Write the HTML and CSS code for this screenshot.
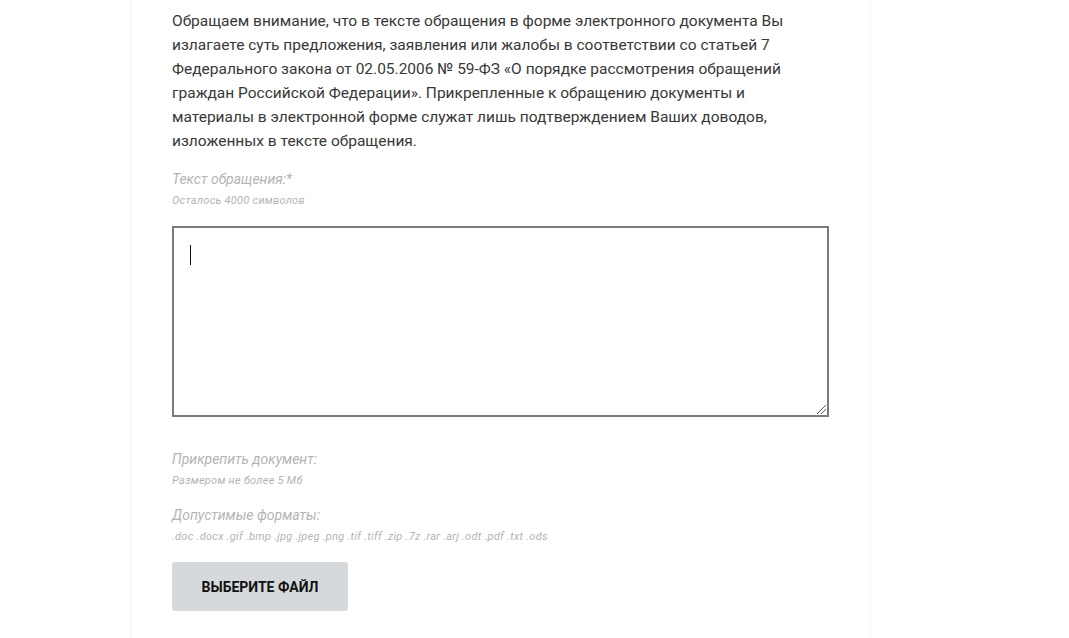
FILE: index.html
```html
<!DOCTYPE html>
<html lang="ru">
<head>
<meta charset="utf-8">
<link rel="stylesheet" href="styles.css">
</head>
<body>
<div class="card">
  <p class="notice">Обращаем внимание, что в тексте обращения в форме электронного документа Вы излагаете суть предложения, заявления или жалобы в соответствии со статьей 7 Федерального закона от 02.05.2006 № 59-ФЗ «О порядке рассмотрения обращений граждан Российской Федерации». Прикрепленные к обращению документы и материалы в электронной форме служат лишь подтверждением Ваших доводов, изложенных в тексте обращения.</p>

  <div class="field">
    <div class="label">Текст обращения:*</div>
    <div class="hint">Осталось 4000 символов</div>
    <div class="textarea"><span class="caret"></span><span class="grip"></span></div>
  </div>

  <div class="field attach">
    <div class="label">Прикрепить документ:</div>
    <div class="hint">Размером не более 5 Мб</div>
    <div class="label second">Допустимые форматы:</div>
    <div class="hint">.doc .docx .gif .bmp .jpg .jpeg .png .tif .tiff .zip .7z .rar .arj .odt .pdf .txt .ods</div>
    <button class="file-btn">ВЫБЕРИТЕ ФАЙЛ</button>
  </div>
</div>
</body>
</html>
```

FILE: styles.css
```css
html, body {
  margin: 0;
  padding: 0;
  background: #ffffff;
}
body {
  font-family: Roboto, "Liberation Sans", sans-serif;
  overflow: hidden;
}
.card {
  margin-left: 132px;
  width: 737px;
  min-height: 700px;
  box-sizing: border-box;
  padding: 9px 40px 0 40px;
  background: #fff;
  box-shadow: 0 0 6px rgba(0, 0, 0, 0.07);
}
.notice {
  margin: 0;
  font-size: 15.5px;
  line-height: 24px;
  color: #383838;
}
.field {
  margin-top: 17px;
}
.label {
  font-size: 14px;
  line-height: 18px;
  font-style: italic;
  color: #b4b4b4;
}
.hint {
  margin-top: 6px;
  font-size: 11px;
  line-height: 14px;
  letter-spacing: 0.27px;
  font-style: italic;
  color: #b4b4b4;
}
.textarea {
  position: relative;
  margin-top: 18px;
  width: 657px;
  height: 191px;
  box-sizing: border-box;
  border: 2px solid #7b7b7b;
  background: #fff;
  padding: 17px 16px;
}
.caret {
  display: block;
  width: 1px;
  height: 20px;
  background: #111;
}
.grip {
  position: absolute;
  right: 1px;
  bottom: 1px;
  width: 9px;
  height: 9px;
  background: linear-gradient(135deg, transparent 0 45%, #555 45% 52%, transparent 52% 68%, #555 68% 75%, transparent 75%);
}
.attach {
  margin-top: 33px;
}
.label.second {
  margin-top: 18px;
}
.file-btn {
  display: block;
  margin-top: 18px;
  width: 176px;
  height: 49px;
  border: none;
  border-radius: 3px;
  background: #d6d9db;
  color: #111;
  font-family: Roboto, "Liberation Sans", sans-serif;
  font-weight: 700;
  font-size: 14px;
  letter-spacing: 0;
  padding: 0;
}
```
